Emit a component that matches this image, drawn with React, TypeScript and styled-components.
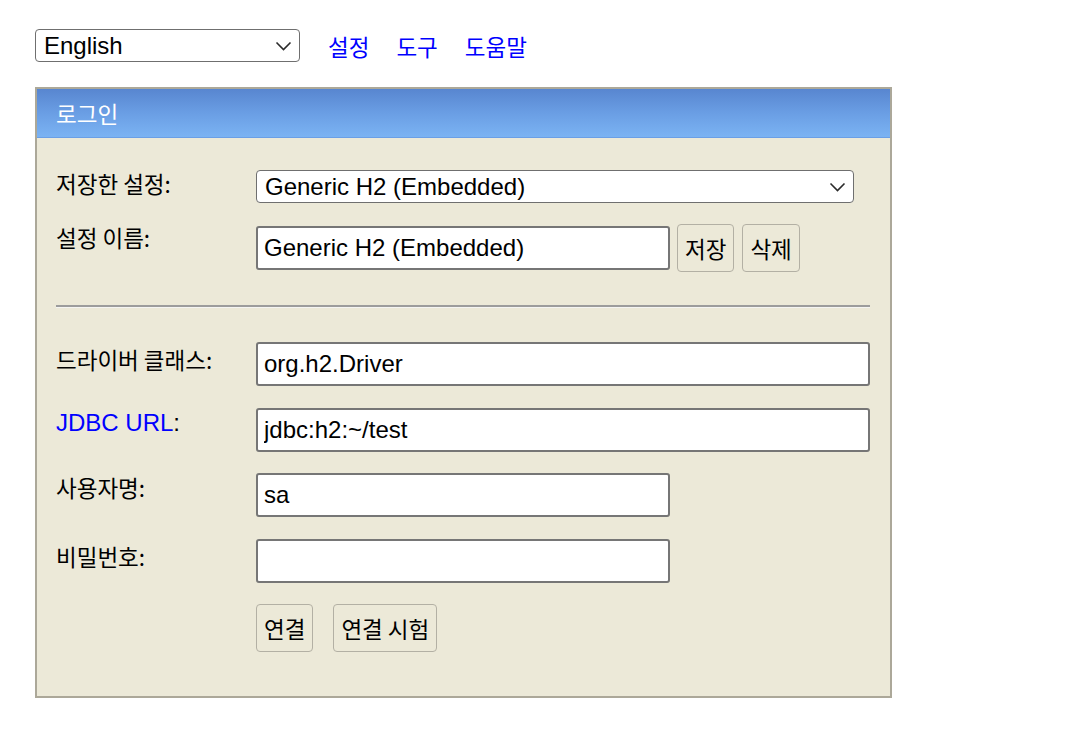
import React from 'react';
import styled, { createGlobalStyle } from 'styled-components';

const GlobalStyle = createGlobalStyle`
  html, body {
    margin: 0;
    padding: 0;
    background: #ffffff;
  }
  body {
    font-family: "Liberation Sans", "Noto Sans CJK KR", Arial, sans-serif;
    color: #000000;
  }
`;

const LATIN = '"Liberation Sans", Arial, sans-serif';
const HANGUL = '"Noto Sans CJK KR", "Liberation Sans", sans-serif';

const Page = styled.div`
  padding: 29px 0 0 35px;
`;

const TopBar = styled.div`
  display: flex;
  align-items: center;
  gap: 27px;
  height: 33px;
`;

const SelectWrap = styled.div<{ $width: number; $height: number }>`
  position: relative;
  width: ${p => p.$width}px;
  height: ${p => p.$height}px;
  flex: none;
`;

const NativeSelect = styled.select<{ $border: number }>`
  appearance: none;
  -webkit-appearance: none;
  box-sizing: border-box;
  width: 100%;
  height: 100%;
  margin: 0;
  border: ${p => p.$border}px solid #6f6f6f;
  border-radius: 4px;
  background: #ffffff;
  color: #000000;
  font-family: ${LATIN};
  font-size: 24px;
  padding: 0 34px 0 8px;
  outline: none;
`;

const Chevron = styled.svg`
  position: absolute;
  right: 8px;
  top: 50%;
  transform: translateY(-50%);
  pointer-events: none;
`;

const NavLink = styled.a`
  color: #0000ff;
  font-family: ${HANGUL};
  font-size: 22.5px;
  line-height: 26px;
  text-decoration: none;
  &:first-of-type {
    margin-left: 1px;
  }
`;

const Panel = styled.div`
  box-sizing: border-box;
  width: 857px;
  margin-top: 25px;
  border: 2px solid #aca899;
  background: #ece9d8;
`;

const PanelHeader = styled.div`
  box-sizing: border-box;
  height: 49px;
  padding-left: 19px;
  display: flex;
  align-items: center;
  background: linear-gradient(to bottom, #5886d0 0%, #6a9ee4 50%, #7bb3f3 100%);
  border-bottom: 1px solid #6a9fe6;
  color: #ffffff;
  font-family: ${HANGUL};
  font-size: 22.5px;
`;

const PanelBody = styled.div`
  padding: 32px 20px 44px 19px;
`;

const Row = styled.div<{ $mt: number; $center?: boolean }>`
  display: flex;
  align-items: ${p => (p.$center ? 'center' : 'flex-start')};
  margin-top: ${p => p.$mt}px;
`;

const Label = styled.div<{ $top: number }>`
  flex: none;
  align-self: flex-start;
  width: 200px;
  padding-top: ${p => p.$top}px;
  font-family: ${HANGUL};
  font-size: 22.5px;
  line-height: 24px;
`;

const LabelLink = styled.a`
  color: #0000ff;
  text-decoration: none;
  font-family: ${LATIN};
  font-size: 24px;
  line-height: 24px;
`;

const Colon = styled.span`
  font-family: ${LATIN};
  font-size: 24px;
  line-height: 24px;
`;

const Field = styled.input<{ $width: number }>`
  box-sizing: border-box;
  width: ${p => p.$width}px;
  height: 44px;
  margin: 0;
  border: 2px solid #767676;
  border-radius: 3px;
  background: #ffffff;
  color: #000000;
  font-family: ${LATIN};
  font-size: 24px;
  padding: 0 6px;
  outline: none;
`;

const Button = styled.button<{ $ml: number }>`
  box-sizing: border-box;
  height: 48px;
  margin: 0 0 0 ${p => p.$ml}px;
  padding: 0 7px;
  border: 1.5px solid #b3b0a4;
  border-radius: 4px;
  background: #ece9d8;
  color: #000000;
  font-family: ${HANGUL};
  font-size: 22.5px;
  cursor: pointer;
`;

const Divider = styled.div`
  width: 814px;
  height: 0;
  margin-top: 33px;
  border-top: 2px solid #9c9c9c;
  border-bottom: 1px solid #f4f4f2;
`;

const ButtonRow = styled.div`
  display: flex;
  margin: 21px 0 0 200px;
`;

function Select({ width, height, border, value }: { width: number; height: number; border: number; value: string }) {
  return (
    <SelectWrap $width={width} $height={height}>
      <NativeSelect $border={border} defaultValue={value}>
        <option value={value}>{value}</option>
      </NativeSelect>
      <Chevron width="17" height="10" viewBox="0 0 17 10">
        <path d="M1.5 1.5 L8.5 8.5 L15.5 1.5" fill="none" stroke="#2b2b2b" strokeWidth="1.6" />
      </Chevron>
    </SelectWrap>
  );
}

export default function App() {
  return (
    <Page>
      <GlobalStyle />
      <TopBar>
        <Select width={265} height={33} border={1} value="English" />
        <NavLink href="#">설정</NavLink>
        <NavLink href="#">도구</NavLink>
        <NavLink href="#">도움말</NavLink>
      </TopBar>
      <Panel>
        <PanelHeader>로그인</PanelHeader>
        <PanelBody>
          <Row $mt={0}>
            <Label $top={1}>저장한 설정:</Label>
            <Select width={598} height={33} border={1.5} value="Generic H2 (Embedded)" />
          </Row>
          <Row $mt={21} $center>
            <Label $top={1}>설정 이름:</Label>
            <Field $width={414} defaultValue="Generic H2 (Embedded)" />
            <Button $ml={7}>저장</Button>
            <Button $ml={8}>삭제</Button>
          </Row>
          <Divider />
          <Row $mt={34}>
            <Label $top={5}>드라이버 클래스:</Label>
            <Field $width={614} defaultValue="org.h2.Driver" />
          </Row>
          <Row $mt={22}>
            <Label $top={1}>
              <LabelLink href="#">JDBC URL</LabelLink>
              <Colon>:</Colon>
            </Label>
            <Field $width={614} defaultValue="jdbc:h2:~/test" />
          </Row>
          <Row $mt={21}>
            <Label $top={2}>사용자명:</Label>
            <Field $width={414} defaultValue="sa" />
          </Row>
          <Row $mt={22}>
            <Label $top={5}>비밀번호:</Label>
            <Field $width={414} type="password" defaultValue="" />
          </Row>
          <ButtonRow>
            <Button $ml={0}>연결</Button>
            <Button $ml={20}>연결 시험</Button>
          </ButtonRow>
        </PanelBody>
      </Panel>
    </Page>
  );
}
